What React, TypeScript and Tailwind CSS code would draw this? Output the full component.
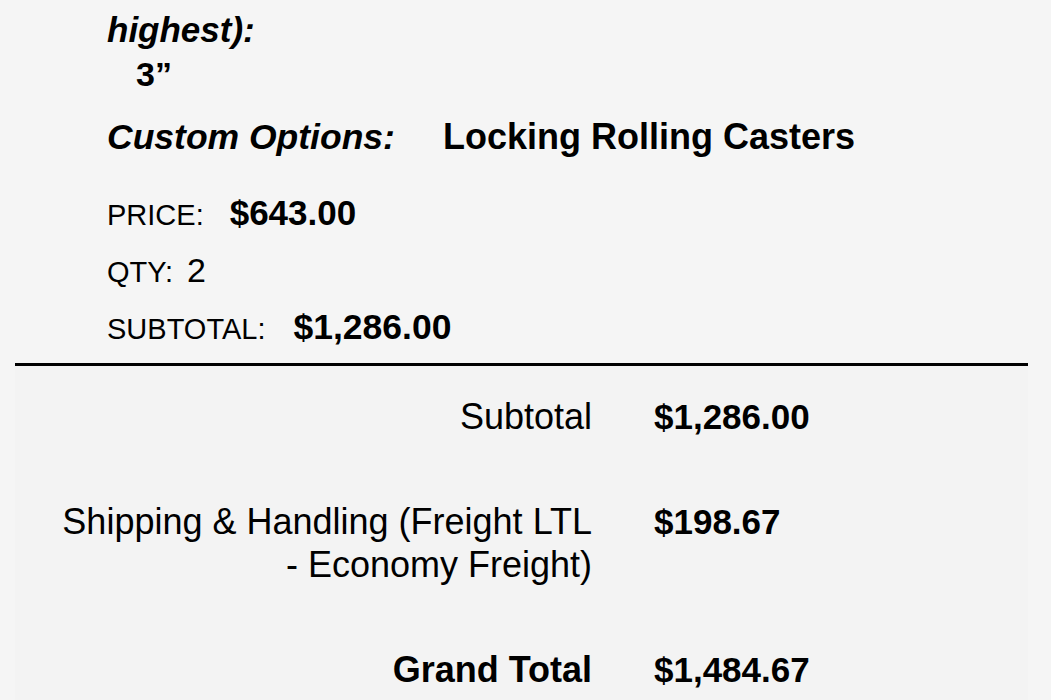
import React from "react";

export default function App() {
  return (
    <div
      className="w-[1051px] h-[700px] overflow-hidden bg-[#f5f5f5] text-black"
      style={{ fontFamily: '"Liberation Sans", Arial, Helvetica, sans-serif' }}
    >
      <div className="pl-[107px] pt-[8px]">
        <div className="text-[35px] leading-[44px] font-bold italic">highest):</div>
        <div className="pl-[29px] text-[34px] leading-[44px] font-bold">3”</div>
        <div className="mt-[19px] flex items-baseline leading-[44px] font-bold">
          <span className="italic text-[35.5px]">Custom Options:</span>
          <span className="ml-[48px] text-[36px]">Locking Rolling Casters</span>
        </div>
        <div className="mt-[32px] flex flex-col">
          <div className="flex items-baseline h-[57px]">
            <span className="text-[29px] leading-[44px]">PRICE:</span>
            <span className="ml-[26px] text-[35px] leading-[44px] font-bold">$643.00</span>
          </div>
          <div className="flex items-baseline h-[57px]">
            <span className="text-[29px] leading-[44px]">QTY:</span>
            <span className="ml-[14px] text-[34px] leading-[44px]">2</span>
          </div>
          <div className="flex items-baseline h-[57px]">
            <span className="text-[29px] leading-[44px]">SUBTOTAL:</span>
            <span className="ml-[28px] text-[35.5px] leading-[44px] font-bold">$1,286.00</span>
          </div>
        </div>
      </div>
      <div className="mt-[1px] ml-[15px] w-[1013px] h-[3px] bg-black" />
      <div className="ml-[15px] w-[1013px] h-[400px] bg-[#f3f3f3] pt-[29px]">
        <div className="grid grid-cols-[577px_1fr] gap-y-[62px] text-[36px] leading-[43px]">
          <div className="text-right">Subtotal</div>
          <div className="pl-[62px] text-[35px] font-bold">$1,286.00</div>
          <div className="text-right">
            Shipping &amp; Handling (Freight LTL
            <br />- Economy Freight)
          </div>
          <div className="pl-[62px] text-[35px] font-bold">$198.67</div>
          <div className="text-right font-bold">Grand Total</div>
          <div className="pl-[62px] text-[35px] font-bold">$1,484.67</div>
        </div>
      </div>
    </div>
  );
}
